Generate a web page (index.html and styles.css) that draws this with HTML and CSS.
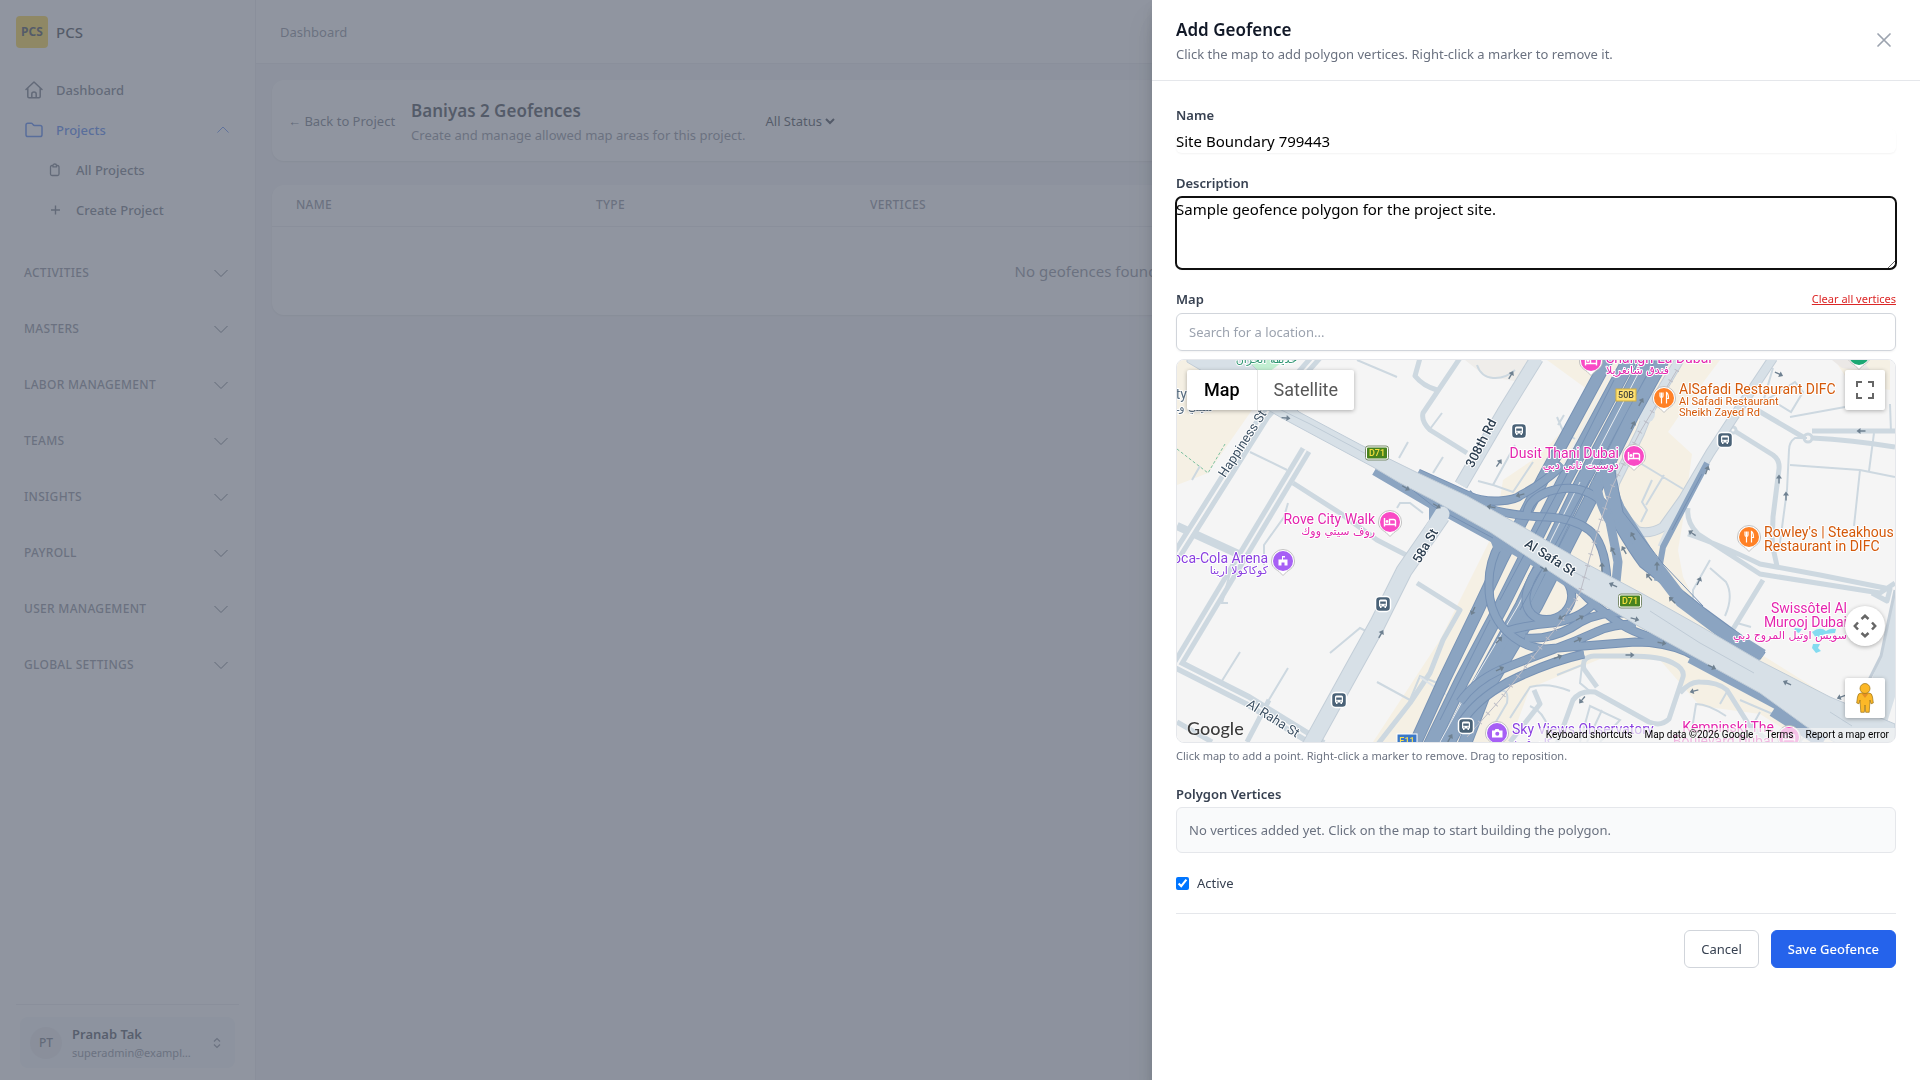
FILE: index.html
```html
<!DOCTYPE html>
<html lang="en">
<head>
<meta charset="utf-8">
<meta name="viewport" content="width=device-width, initial-scale=1">
<title>Add Geofence</title>
<link rel="stylesheet" href="styles.css">
</head>
<body>
<svg class="defs" width="0" height="0" aria-hidden="true">
  <defs>
    <symbol id="chevron" viewBox="0 0 14 14"><path d="M0.500 4l6.500 6.500L13.500 4" fill="none" stroke="currentColor"/></symbol>
    <g id="arrow" fill="#6f8191"><path d="M-4.500-0.700h5v-2.300L4.500 0 0.500 3V0.700h-5z"/></g>
    <g id="bus">
      <rect x="-7.500" y="-7.500" width="15" height="15" rx="4" fill="#4a6277" stroke="#fff" stroke-width="1.500"/>
      <path d="M-4-3q0-1.500 1.500-1.500h5q1.500 0 1.500 1.500v5.500h-1v1.500h-1.500v-1.500h-3v1.500h-1.500v-1.500h-1z" fill="#fff"/>
      <path d="M-2.800-2.500h5.600v2.300h-5.600z" fill="#4a6277"/>
      <circle cx="-2" cy="1.200" r=".6" fill="#4a6277"/><circle cx="2" cy="1.200" r=".6" fill="#4a6277"/>
    </g>
    <path id="pin" d="M-11.500 0a11.500 11.500 0 1 1 23 0c0 6-4 8-7.500 10.500L0 14.500l-4-4C-7.500 8-11.500 6-11.500 0z" fill="#fff" stroke="#b4b4b4" stroke-width=".8"/>
    <g id="hotel"><use href="#pin"/><circle r="10" fill="#f94ac5"/><path d="M-5.500-4v8.500M-5.500 2.500h11M5.500 4.500v-5q0-2-2-2h-4v5" fill="none" stroke="#fff" stroke-width="1.400"/><circle cx="-3" cy="-.5" r="1.400" fill="#fff"/></g>
    <g id="food"><use href="#pin"/><circle r="10" fill="#ff8126"/><path d="M-4-5.500v3.500q0 1.500 1.500 1.500t1.500-1.500v-3.500M-2.500-5.500V5.500M2.500 5.500v-11q2 1 2 6h-2" fill="none" stroke="#fff" stroke-width="1.200"/></g>
    <g id="d71"><rect x="-11.500" y="-7" width="23" height="14" rx="2.500" fill="#fff" stroke="#7b8c6c" stroke-width="1"/><rect x="-10" y="-5.500" width="20" height="11" rx="1" fill="#47821d"/></g>
  </defs>
</svg>

<div class="app">
  <aside class="sidebar">
    <div class="brand"><span class="brand-mark">PCS</span><span>PCS</span></div>
    <nav class="nav">
      <a class="nav-item" href="#">
        <svg class="nav-icon" viewBox="0 0 20 20" fill="none" stroke="currentColor" stroke-width="1.500" stroke-linejoin="round" stroke-linecap="round"><path d="M2 9.500L10 2l8 7.500M3.800 8v8.500q0 1.200 1.200 1.200h10q1.200 0 1.200-1.200V8M7.800 17.500V14q0-2 2.200-2t2.200 2v3.500"/></svg>
        <span>Dashboard</span></a>
      <a class="nav-item nav-active" href="#">
        <svg class="nav-icon" viewBox="0 0 20 20" fill="none" stroke="currentColor" stroke-width="1.500" stroke-linejoin="round"><path d="M2 5q0-1.800 1.800-1.800h3.400q.8 0 1.300.7l.7.9q.5.700 1.300.700h5.700Q18 5.500 18 7.300v7.400q0 1.800-1.800 1.800H3.800Q2 16.500 2 14.700z"/></svg>
        <span>Projects</span>
        <svg class="nav-chev up"><use href="#chevron"/></svg></a>
      <a class="nav-item nav-sub" href="#">
        <svg class="sub-icon" viewBox="0 0 14 14" fill="none" stroke="currentColor" stroke-width="1.300"><path d="M4.500 2.500H4Q2.500 2.500 2.500 4v7Q2.500 12.500 4 12.500h5.500q1.500 0 1.500-1.500V4Q11 2.500 9.500 2.500H9M5 3.800V2.500Q5 1 6.750 1T8.500 2.500v1.300z"/></svg>
        <span>All Projects</span></a>
      <a class="nav-item nav-sub" href="#">
        <svg class="sub-icon" viewBox="0 0 14 14" fill="none" stroke="currentColor" stroke-width="1.400"><path d="M7.500 2.500v9M3 7h9"/></svg>
        <span>Create Project</span></a>
    </nav>
    <div class="groups">
      <button class="group" type="button">ACTIVITIES<svg class="group-chev"><use href="#chevron"/></svg></button>
      <button class="group" type="button">MASTERS<svg class="group-chev"><use href="#chevron"/></svg></button>
      <button class="group" type="button">LABOR MANAGEMENT<svg class="group-chev"><use href="#chevron"/></svg></button>
      <button class="group" type="button">TEAMS<svg class="group-chev"><use href="#chevron"/></svg></button>
      <button class="group" type="button">INSIGHTS<svg class="group-chev"><use href="#chevron"/></svg></button>
      <button class="group" type="button">PAYROLL<svg class="group-chev"><use href="#chevron"/></svg></button>
      <button class="group" type="button">USER MANAGEMENT<svg class="group-chev"><use href="#chevron"/></svg></button>
      <button class="group" type="button">GLOBAL SETTINGS<svg class="group-chev"><use href="#chevron"/></svg></button>
    </div>
    <div class="account">
      <button class="account-card" type="button">
        <span class="avatar">PT</span>
        <span class="account-text"><span class="account-name">Pranab Tak</span><span class="account-mail">superadmin@example.com</span></span>
        <svg class="account-chev" viewBox="0 0 8 12" fill="none" stroke="currentColor" stroke-width="1.200"><path d="M1 4.500L4 1.500l3 3M1 7.500l3 3 3-3"/></svg>
      </button>
    </div>
  </aside>

  <div class="page">
    <header class="topbar">Dashboard</header>
    <main class="content">
      <section class="card title-card">
        <a class="back" href="#">← Back to Project</a>
        <div>
          <h1 class="page-title">Baniyas 2 Geofences</h1>
          <p class="page-sub">Create and manage allowed map areas for this project.</p>
        </div>
        <select class="status" aria-label="Status"><option>All Status</option></select>
      </section>
      <section class="card">
        <table class="grid">
          <thead><tr><th class="col-name">NAME</th><th class="col-type">TYPE</th><th>VERTICES</th></tr></thead>
          <tbody><tr><td colspan="3">No geofences found.</td></tr></tbody>
        </table>
      </section>
    </main>
  </div>
</div>

<div class="backdrop"></div>

<div class="drawer" role="dialog" aria-labelledby="drawer-title">
  <header class="drawer-head">
    <div>
      <h2 class="drawer-title" id="drawer-title">Add Geofence</h2>
      <p class="drawer-sub">Click the map to add polygon vertices. Right-click a marker to remove it.</p>
    </div>
    <button class="close" type="button" aria-label="Close"><svg viewBox="0 0 24 24" width="24" height="24" fill="none" stroke="currentColor" stroke-width="1.700" stroke-linecap="round"><path d="M6 6l12 12M18 6L6 18"/></svg></button>
  </header>
  <form class="form">
    <div class="field">
      <label class="label" for="name">Name</label>
      <input class="text-in" id="name" type="text" value="Site Boundary 799443">
    </div>
    <div class="field">
      <label class="label" for="desc">Description</label>
      <textarea class="text-in area" id="desc" rows="3">Sample geofence polygon for the project site.</textarea>
    </div>
    <div class="field">
      <div class="label-row"><label class="label" for="search">Map</label><button class="clear" type="button">Clear all vertices</button></div>
      <input class="search" id="search" type="text" placeholder="Search for a location...">
      <div class="map">
        <svg class="map-art" viewBox="1177 360 718 382" preserveAspectRatio="xMidYMid slice" role="img" aria-label="Street map of the project area">
          <rect x="1177" y="360" width="718" height="382" fill="#f5f5f5"/>
          <!-- open ground -->
          <g fill="#f5f0e4">
            <path d="M1177 360h30l52 40-51 73-31 12z"/>
            <path d="M1547 360h173l-30 40-22 32 24 22-9 66-5 30 5 27 17 33 27 23 168 105v4h-90l-45-28-60-8-40-46-60-1-70 29-20 54h-137l67-102 55-110 8-50 37-25 55-60z"/>
          </g>
          <path d="M1237 360l-6 6 30 12 24-18z" fill="#c2efd2"/>
          <path d="M1835 360h55v30l-40-6z" fill="#f5f0e4"/>
          <path d="M1832 360h30l10 12-30-4z" fill="#ebe8e6"/>
          <path d="M1465 360h70l-15 22-35-6z" fill="#efedea"/>
          <path d="M1177 449l31 24 17-29" fill="none" stroke="#7cc0a0" stroke-dasharray="3 2"/>
          <path d="M1812 632q8-6 14-1 4-3 10-2l-1 4-10 1-9 4zM1813 644l7 0-2 4 3 3-5 2-4-5zM1795 628l7 1-3 4-5-2z" fill="#84dbf0"/>

          <!-- local streets -->
          <g fill="none" stroke="#cdd8e0" stroke-width="5" stroke-linejoin="round">
            <path d="M1293 483l47 30 37 27 33 17M1417 583l43 27-17 30-13 33-20 30-32 41M1460 358l-37 55q-2 8 7 17l37 23M1420 358l-5 18q8 10 22 14"/>
            <path d="M1757 410l46 27M1812 431h83M1812 438q40 2 83 9M1733 430l40 25q7 5 6 14l-6 48-1 34M1688 508q-2 14 10 26l62 40 120 19 15-10M1763 580l-33 54M1688 534q30 10 72 30l60 11 70 14-3 12-15-8M1773 548l4 18"/>
            <path d="M1597 687l-13-18q-3-12 10-13l36 0q30 0 43 7 12 6 10 14l-14 42q-8 8-20 3l-54-30q-15-2-22 8l-16 44M1680 693q10-12 20-11 18 0 27 8l22 35 20 17M1510 742l30-38-6-14"/>
            <path d="M1177 722l35 20M1247 742l22-42"/>
          </g>
          <g fill="none" stroke="#cdd8e0" stroke-width="12">
            <path d="M1318 355l-53 60-92 146"/><path d="M1306 450l-36 60-93 155"/><path d="M1177 526l70 32" stroke-width="8"/>
            <path d="M1172 662l75 38 75 46" stroke-width="13"/>
          </g>
          <g fill="none" stroke="#f5f5f5" stroke-width="2">
            <path d="M1318 355l-53 60-92 146"/><path d="M1306 450l-36 60-93 155"/><path d="M1172 662l75 38 75 46"/>
          </g>
          <circle cx="1808" cy="438" r="4" fill="#f5f5f5" stroke="#cdd8e0" stroke-width="3"/>
          <circle cx="1733" cy="430" r="3" fill="#f5f5f5" stroke="#cdd8e0" stroke-width="3"/>
          <g fill="none" stroke="#cdd8e0" stroke-width="2">
            <path d="M1250 452l37 18M1357 360l40 17M1477 365q4 12 16 13t22-8M1397 508l3-5h10l13 10M1330 653l30-25 8 4M1377 682l33 18M1240 652l-20 32M1288 668l-30 50M1288 503l-4 14-20 28v20M1230 573l-8 30h6M1408 442l-9 16M1443 457l-10 16M1442 413l-12 16M1192 480l8-14"/>
            <path d="M1790 417l55-10M1807 438l-12 0q-6 4-6 12l-2 40-8 60M1790 465l70 5 35 7M1860 470l-6 56M1874 433l-5 38M1890 404l1 28M1710 560l-17 30v17l27 20M1710 568l16 14q8 14-1 34M1773 368l-10 34 32-20 8 10-12 20-13-8M1557 417l6 14 12 8M1564 415l-6 10"/>
            <path d="M1640 463l43 26M1652 480l-10 22 5 8-6 12M1664 475l-18 30M1510 718l20-31q18-5 40 4M1530 706q14 6 18 22M1557 675l25-10-2 18 12 10M1580 742l10-36 30 14-20 22M1602 710l-15 32M1690 742l6-38q12 0 30 12M1740 700l70 30-10 12M1728 690l-8 14M1760 712l-10 18M1487 737l20-34q2-14-6-12l-20 10-40 41M1410 700l10-24 20 8M1515 445l-22 40 20 7 20-30M1493 485l-15-4M1737 623l14 4"/>
            <path d="M1420 677l53 36" stroke="#dfe5ea"/>
          </g>

          <!-- wide streets -->
          <g fill="none" stroke="#c3ced8" stroke-linejoin="round">
            <path d="M1537 358l-34 55-42 72" stroke-width="14"/>
            <path d="M1442 516l-38 55-27 54-25 45-42 76" stroke-width="17"/>
            <path d="M1773 358l-36 54-27 41-27 46-20 28q-14 8-26 4l-18-20q-8-14-4-28l25-50 8-20 32-54" stroke-width="10"/>
          </g>
          <g fill="none" stroke="#d7e0e7" stroke-linejoin="round">
            <path d="M1537 358l-34 55-42 72" stroke-width="12"/>
            <path d="M1442 516l-38 55-27 54-25 45-42 76" stroke-width="15"/>
            <path d="M1773 358l-36 54-27 41-27 46-20 28q-14 8-26 4l-18-20q-8-14-4-28l25-50 8-20 32-54" stroke-width="8"/>
            <path d="M1683 499l-22 48" stroke-width="7"/>
            <path d="M1646 400v14" stroke-width="18" stroke-linecap="round"/>
          </g>
          <path d="M1895 590l-14 66-16 40 10 46h6l14-45z" fill="#d7e0e7"/>
          <path d="M1895 590l-14 66-18 36" fill="none" stroke="#c3ced8" stroke-width="3"/>

          <!-- expressway lanes -->
          <g fill="none" stroke="#7893b5" stroke-linejoin="round">
            <path d="M1414 746l30-66 32-66 26-55 42-82 66-122" stroke-width="13"/>
            <path d="M1430 746l32-66 40-75 62-124 68-126" stroke-width="15"/>
            <path d="M1446 746l30-56 46-84 60-124 68-128" stroke-width="15"/>
            <path d="M1464 746l20-52 52-88 56-110 40-80 34-62" stroke-width="14"/>
          </g>
          <g fill="none" stroke="#8ba4c1" stroke-linejoin="round">
            <path d="M1414 746l30-66 32-66 26-55 42-82 66-122" stroke-width="11"/>
            <path d="M1430 746l32-66 40-75 62-124 68-126" stroke-width="13"/>
            <path d="M1446 746l30-56 46-84 60-124 68-128" stroke-width="13"/>
            <path d="M1464 746l20-52 52-88 56-110 40-80 34-62" stroke-width="12"/>
          </g>
          <g fill="none" stroke="#e9edf0" stroke-width="1">
            <path d="M1440 742l34-62 44-74 62-124M1544 500l26-48 42-82M1590 466l50-96"/>
          </g>

          <!-- ramps, drawn as an edge colour under a fill colour -->
          <g fill="none" stroke="#7691b4" stroke-width="9" stroke-linejoin="round">
            <path d="M1418 473l49 22q15 7 32 6t22-6q20-10 42-30M1467 493q10 13 30 18t50 6q26 1 42 13t18 50M1527 519q-2-18 20-27 24-8 42 1 18 8 30 34 14 24 24 37l60 48 60 44"/>
            <path d="M1547 567q14 4 22 18 7 14-4 27-12 11-28 6-12-6-11-22 2-14 12-28M1500 543q-12 20-11 44 0 22 12 38 18 22 44 24l90-7q30 0 52 10l80 42 60 40M1507 631q20-6 45-8 28-4 42-20M1525 638q24 2 46-10 20-14 42-15 16-2 40 10M1460 702q14-20 40-32 30-12 52-20t44-18q16-8 40-8M1462 722q14-22 46-40 40-20 76-28M1580 590q16 18 44 36 16 10 60 20"/>
          </g>
          <g fill="none" stroke="#8ba4c1" stroke-width="7" stroke-linejoin="round">
            <path d="M1418 473l49 22q15 7 32 6t22-6q20-10 42-30M1467 493q10 13 30 18t50 6q26 1 42 13t18 50M1527 519q-2-18 20-27 24-8 42 1 18 8 30 34 14 24 24 37l60 48 60 44"/>
            <path d="M1547 567q14 4 22 18 7 14-4 27-12 11-28 6-12-6-11-22 2-14 12-28M1500 543q-12 20-11 44 0 22 12 38 18 22 44 24l90-7q30 0 52 10l80 42 60 40M1507 631q20-6 45-8 28-4 42-20M1525 638q24 2 46-10 20-14 42-15 16-2 40 10M1460 702q14-20 40-32 30-12 52-20t44-18q16-8 40-8M1462 722q14-22 46-40 40-20 76-28M1580 590q16 18 44 36 16 10 60 20"/>
            <path d="M1610 455q-4 30 8 54l32 50 32 42 40 30 40 25" stroke-width="14"/>
            <path d="M1596 480q2 22 14 42l8 40-2 20" stroke-width="9"/>
            <path d="M1707 463l-20 38-24 46-6 34" stroke-width="6"/>
            <path d="M1375 470l58 34 62 34 52 30 40 26" stroke-width="11"/>
            <path d="M1433 506v14M1493 536l6 16" stroke-width="8"/>
            <path d="M1690 658l90 48" stroke-width="10"/>
            <path d="M1774 709l50 32" stroke-width="16"/>
          </g>
          <g fill="none" stroke="#7691b4" stroke-width="1">
            <path d="M1613 462l10 50 40 52 40 42M1702 474l-30 56M1405 484l28 22 60 32M1440 720l50-100M1500 600l64-120 50-100M1520 610l70-130"/>
          </g>

          <!-- Al Safa Street -->
          <path d="M1187 350L1237 350 1299 412 1361 445 1418 473 1467 496 1523 527 1587 564 1643 594 1700 626 1760 661 1830 697 1895 724 1895 760 1840 745 1807 727 1760 693 1700 660 1640 627 1583 593 1540 565 1490 532 1433 500 1400 483 1373 467 1280 417 1187 362z" fill="#d7e0e7" stroke="#c0ccd7"/>
          <g fill="none" stroke="#bfcbd6" stroke-width="1"><path d="M1240 390l70 34 60 32M1570 570l20 10M1650 611l50 32 54 30M1830 712l22 14"/></g>
          <path d="M1442 514l-10 16" stroke="#d7e0e7" stroke-width="15" stroke-linecap="round"/>

          <!-- metro line -->
          <g fill="none" stroke="#bcbdc6">
            <path d="M1677 370l-37 62-28 55-12 36-10 34-10 36-20 30-27 34-33 43-33 37"/>
            <path d="M1677 370l-37 62-28 55-12 36-10 34-10 36-20 30-27 34-33 43-33 37" stroke-width="5" stroke-dasharray="1 11"/>
          </g>

          <!-- one-way arrows -->
          <g>
            <use href="#arrow" transform="translate(1286 418) rotate(5)"/><use href="#arrow" transform="translate(1406 488) rotate(30)"/><use href="#arrow" transform="translate(1437 506) rotate(30)"/><use href="#arrow" transform="translate(1511 375) rotate(-60)"/><use href="#arrow" transform="translate(1499 463) rotate(-55)"/><use href="#arrow" transform="translate(1520 495) rotate(165)"/><use href="#arrow" transform="translate(1491 507) rotate(190)"/><use href="#arrow" transform="translate(1544 569) rotate(30)"/><use href="#arrow" transform="translate(1473 611) rotate(115)"/><use href="#arrow" transform="translate(1381 634) rotate(-60)"/><use href="#arrow" transform="translate(1499 640) rotate(-45)"/><use href="#arrow" transform="translate(1500 669) rotate(-25)"/><use href="#arrow" transform="translate(1450 738) rotate(-60)"/><use href="#arrow" transform="translate(1562 617) rotate(150)"/><use href="#arrow" transform="translate(1580 618) rotate(-30)"/><use href="#arrow" transform="translate(1578 640) rotate(-25)"/><use href="#arrow" transform="translate(1558 657) rotate(-20)"/><use href="#arrow" transform="translate(1602 567) rotate(-90)"/><use href="#arrow" transform="translate(1613 551) rotate(-120)"/><use href="#arrow" transform="translate(1624 550) rotate(-120)"/><use href="#arrow" transform="translate(1633 536) rotate(-120)"/><use href="#arrow" transform="translate(1613 585) rotate(205)"/><use href="#arrow" transform="translate(1649 577) rotate(-130)"/><use href="#arrow" transform="translate(1657 566) rotate(-90)"/><use href="#arrow" transform="translate(1672 600) rotate(-135)"/><use href="#arrow" transform="translate(1635 619) rotate(15)"/><use href="#arrow" transform="translate(1662 643) rotate(10)"/><use href="#arrow" transform="translate(1712 667) rotate(25)"/><use href="#arrow" transform="translate(1630 655)"/><use href="#arrow" transform="translate(1694 691) rotate(165)"/><use href="#arrow" transform="translate(1582 700) rotate(130)"/><use href="#arrow" transform="translate(1787 683) rotate(205)"/><use href="#arrow" transform="translate(1841 697) rotate(160)"/><use href="#arrow" transform="translate(1707 470) rotate(-70)"/><use href="#arrow" transform="translate(1779 479) rotate(-90)"/><use href="#arrow" transform="translate(1786 496) rotate(-90)"/><use href="#arrow" transform="translate(1861 431) rotate(180)"/><use href="#arrow" transform="translate(1692 533) rotate(215)"/><use href="#arrow" transform="translate(1699 581) rotate(-65)"/><use href="#arrow" transform="translate(1633 425) rotate(-65)"/><use href="#arrow" transform="translate(1641 402) rotate(-60)"/><use href="#arrow" transform="translate(1779 374) rotate(25)"/>
          </g>

          <!-- shields and stops -->
          <use href="#d71" x="1377" y="453"/><text class="shield" x="1377" y="456" fill="#f4e03c">D71</text>
          <use href="#d71" x="1630" y="601"/><text class="shield" x="1630" y="604" fill="#f4e03c">D71</text>
          <rect x="1616" y="389" width="20" height="12" fill="#fde073" stroke="#d3b03f"/><text class="shield" x="1626" y="398" fill="#4a4a3c">50B</text>
          <rect x="1397" y="734" width="20" height="13" fill="#3b78c8" stroke="#fff"/><text class="shield" x="1407" y="744" fill="#f7df52">E11</text>
          <use href="#bus" x="1519" y="431"/><use href="#bus" x="1383" y="604"/><use href="#bus" x="1339" y="700"/><use href="#bus" x="1466" y="726"/><use href="#bus" x="1725" y="440"/>

          <!-- street names -->
          <g class="street">
            <text transform="translate(1246 446) rotate(-57)">Happiness St</text>
            <text transform="translate(1485 445) rotate(-63)" class="bold">308th Rd</text>
            <text transform="translate(1429 548) rotate(-60)" class="bold">58a St</text>
            <text transform="translate(1548 561) rotate(32)" class="bold">Al Safa St</text>
            <text transform="translate(1271 722) rotate(32)">Al Raha St</text>
          </g>

          <!-- places -->
          <g class="end poi">
            <text x="1375" y="524" fill="#e425ae">Rove City Walk</text><text x="1375" y="535" fill="#e425ae" class="ar">روف سيتي ووك</text>
            <text x="1268" y="563" fill="#8a3fe0">Coca-Cola Arena</text><text x="1268" y="574" fill="#8a3fe0" class="ar">كوكاكولا ارينا</text>
            <text x="1619" y="458" fill="#e425ae">Dusit Thani Dubai</text><text x="1619" y="469" fill="#e425ae" class="ar">دوسيت ثاني دبي</text>
            <text x="1847" y="613" fill="#e425ae">Swissôtel Al</text><text x="1847" y="627" fill="#e425ae">Murooj Dubai</text><text x="1847" y="639" fill="#e425ae" class="ar">سويس اوتيل المروج دبي</text>
            <text x="1774" y="732" fill="#e425ae">Kempinski The</text><text x="1774" y="746" fill="#e425ae">Boulevard Dubai</text>
            <text x="1297" y="363" fill="#2d9470" class="ar">حديقة الخزان</text>
            <text x="1187" y="399" fill="#5a6f82">ty</text><text x="1213" y="411" fill="#5a6f82" class="ar">سيتي وـ</text>
          </g>
          <g class="poi">
            <text x="1606" y="363" fill="#e425ae">Shangri-La Dubai</text><text x="1606" y="374" fill="#e425ae" class="ar">فندق شانغريلا</text>
            <text x="1679" y="394" fill="#d4590a">AlSafadi Restaurant DIFC</text><text x="1679" y="405" fill="#d4590a" class="small">Al Safadi Restaurant</text><text x="1679" y="416" fill="#d4590a" class="small">Sheikh Zayed Rd</text>
            <text x="1764" y="537" fill="#d4590a">Rowley's | Steakhous</text><text x="1764" y="551" fill="#d4590a">Restaurant in DIFC</text>
            <text x="1512" y="734" fill="#8a3fe0">Sky Views Observatory</text><text x="1512" y="746" fill="#8a3fe0" class="ar">سكاي فيوز</text>
          </g>
          <use href="#hotel" x="1390" y="522"/><use href="#hotel" x="1634" y="456"/><use href="#hotel" x="1591" y="361"/><use href="#hotel" x="1789" y="737"/>
          <use href="#food" x="1664" y="398"/><use href="#food" x="1749" y="537"/>
          <g transform="translate(1859 355)"><use href="#pin"/><circle r="10" fill="#1ba874"/></g>
          <g transform="translate(1283 561)"><use href="#pin"/><circle r="10" fill="#a760f5"/><path d="M-4.500 4.500v-6H-1V-5h3v1.500H0v2h4.500v6H1.500v-3h-3v3z" fill="#fff"/></g>
          <g transform="translate(1497 733)"><use href="#pin"/><circle r="10" fill="#a760f5"/><path d="M-5-2.500h2.500l1-1.500h3l1 1.500H5.500v7h-10.500z" fill="#fff"/><circle cx=".3" cy=".8" r="2" fill="#a760f5"/></g>
        </svg>
        <div class="map-type"><button class="map-btn on" type="button">Map</button><button class="map-btn" type="button">Satellite</button></div>
        <button class="ctl ctl-full" type="button" aria-label="Toggle fullscreen view"><svg viewBox="0 0 18 18" width="18" height="18" fill="none" stroke="#666" stroke-width="2"><path d="M1 6V1h5M12 1h5v5M17 12v5h-5M6 17H1v-5"/></svg></button>
        <button class="ctl ctl-cam" type="button" aria-label="Map camera controls"><svg viewBox="0 0 24 24" width="24" height="24" fill="none" stroke="#666" stroke-width="2.500"><path d="M8.500 5L12 1.800 15.500 5M8.500 19l3.500 3.200 3.500-3.200M5 8.500L1.800 12 5 15.500M19 8.500l3.200 3.500L19 15.500"/></svg></button>
        <button class="ctl ctl-peg" type="button" aria-label="Street View"><svg viewBox="0 0 18 30" width="18" height="30"><path d="M5 10h8q3 0 3.500 4l.8 6-2.300.8-1-3.800-.8 12.300H9.700L9 22l-.7 7.300H4.800L4 17l-1 3.800L.7 20l.8-6Q2 10 5 10z" fill="#fcb827" stroke="#9c7417" stroke-width=".7"/><path d="M5.500 10.500h7L9 15z" fill="#e58f25"/><circle cx="9" cy="5.500" r="5" fill="#fcb827" stroke="#9c7417" stroke-width=".7"/></svg></button>
        <a class="google" href="#">Google</a>
        <div class="credits"><button class="credit" type="button">Keyboard shortcuts</button><span class="credit">Map data ©2026 Google</span><a class="credit" href="#">Terms</a><a class="credit" href="#">Report a map error</a></div>
      </div>
      <p class="hint">Click map to add a point. Right-click a marker to remove. Drag to reposition.</p>
    </div>
    <div class="field">
      <span class="label">Polygon Vertices</span>
      <div class="empty">No vertices added yet. Click on the map to start building the polygon.</div>
    </div>
    <div class="check"><input type="checkbox" id="active" checked><label for="active">Active</label></div>
    <div class="actions"><button class="btn" type="button">Cancel</button><button class="btn primary" type="submit">Save Geofence</button></div>
  </form>
</div>
</body>
</html>
```
FILE: styles.css
```css
* { box-sizing: border-box; margin: 0; padding: 0; }
body { font-family: "Noto Sans", "Open Sans", sans-serif; font-size: 13px; line-height: 20px; color: #374151; background: #f3f4f6; }
button, input, textarea, select { font: inherit; color: inherit; border: 0; background: none; }
a { color: inherit; text-decoration: none; }
svg { display: block; flex: none; }
.defs { position: absolute; }

.app { display: flex; height: 100vh; }
.sidebar { width: 256px; flex: none; display: flex; flex-direction: column; background: #fff; border-right: 1px solid #e5e7eb; }
.brand { display: flex; align-items: center; gap: 8px; padding: 16px 16px 0; font-size: 15px; font-weight: 500; color: #111827; }
.brand-mark { width: 32px; height: 32px; border-radius: 4px; background: #facc15; font-size: 12px; font-weight: 700; line-height: 32px; text-align: center; }
.nav { padding-top: 22px; }
.nav-item { display: flex; align-items: center; gap: 12px; height: 40px; padding: 0 26px 0 24px; font-weight: 500; color: #4b5563; }
.nav-icon { width: 20px; height: 20px; }
.nav-active { color: #2563eb; }
.nav-chev { width: 12px; height: 12px; margin-left: auto; }
.up { transform: rotate(180deg); }
.nav-sub { gap: 14px; padding-left: 48px; }
.sub-icon { width: 14px; height: 14px; }
.groups { flex: 1; padding-top: 15px; }
.group { display: flex; align-items: center; justify-content: space-between; width: 100%; height: 56px; padding: 0 27px 0 24px; font-size: 12px; font-weight: 500; letter-spacing: 0.3px; color: #6b7280; }
.group-chev { width: 14px; height: 14px; color: #4b5563; }
.account { margin: 0 16px; padding: 12px 4px; border-top: 1px solid #e5e7eb; }
.account-card { display: flex; align-items: center; gap: 10px; width: 100%; height: 51px; padding: 0 14px 0 10px; border-radius: 8px; background: #f1f5f9; text-align: left; }
.avatar { width: 32px; height: 32px; flex: none; border-radius: 50%; background: #e5e7eb; font-size: 12px; font-weight: 500; line-height: 32px; text-align: center; color: #4b5563; }
.account-text { flex: 1; min-width: 0; display: flex; flex-direction: column; }
.account-name { font-weight: 600; line-height: 19px; color: #1f2937; }
.account-mail { width: 122px; overflow: hidden; text-overflow: ellipsis; white-space: nowrap; font-size: 11px; line-height: 17px; color: #6b7280; }
.account-chev { width: 8px; height: 12px; color: #6b7280; }

.page { flex: 1; min-width: 0; }
.topbar { height: 64px; padding: 0 24px; line-height: 64px; background: #fff; border-bottom: 1px solid #e5e7eb; color: #6b7280; }
.content { display: flex; flex-direction: column; gap: 24px; padding: 16px; }
.card { background: #fff; border-radius: 12px; box-shadow: 0 1px 2px rgba(0, 0, 0, 0.1); overflow: hidden; }
.title-card { display: flex; align-items: center; gap: 16px; height: 81px; padding: 0 16px; }
.back { color: #4b5563; }
.page-title { font-size: 17px; font-weight: 600; line-height: 28px; color: #111827; }
.page-sub { color: #6b7280; }
.status { color: #111827; }
.grid { width: 100%; border-collapse: collapse; }
.grid th { height: 41px; padding: 0 24px; text-align: left; font-size: 12px; font-weight: 500; letter-spacing: 0.3px; color: #6b7280; border-bottom: 1px solid #e5e7eb; }
.col-name { width: 300px; }
.col-type { width: 274px; }
.grid td { height: 89px; text-align: center; font-size: 15px; color: #6b7280; }

.backdrop { position: fixed; inset: 0; background: rgba(107, 114, 128, 0.75); }
.drawer { position: fixed; inset: 0 0 0 auto; width: 768px; max-width: 100%; overflow-y: auto; background: #fff; box-shadow: 0 20px 25px rgba(0, 0, 0, 0.1), 0 8px 10px rgba(0, 0, 0, 0.1); }
.drawer-head { display: flex; align-items: center; justify-content: space-between; padding: 16px 24px; border-bottom: 1px solid #e5e7eb; }
.drawer-title { font-size: 17px; font-weight: 600; line-height: 28px; color: #111827; }
.drawer-sub { color: #6b7280; }
.close { height: 24px; color: #9ca3af; }
.form { display: flex; flex-direction: column; gap: 20px; padding: 24px; }
.field { display: flex; flex-direction: column; }
.label { font-weight: 600; color: #374151; }
.label-row { display: flex; justify-content: space-between; }
.text-in { display: block; width: 100%; height: 24px; margin-top: 4px; border-radius: 6px; box-shadow: 0 1px 2px rgba(0, 0, 0, 0.05); font-size: 15px; line-height: 24px; color: #000; }
.area { height: 72px; resize: vertical; outline: 2px solid #101010; outline-offset: -1px; }
.clear { font-size: 11px; color: #dc2626; text-decoration: underline; }
.search { height: 38px; margin-top: 4px; padding: 0 12px; border: 1px solid #d1d5db; border-radius: 6px; box-shadow: 0 1px 2px rgba(0, 0, 0, 0.05); }
.search::placeholder { color: #9ca3af; }

.map { position: relative; height: 384px; margin-top: 8px; border: 1px solid #e5e7eb; border-radius: 8px; overflow: hidden; font-family: Roboto, sans-serif; }
.map-art { width: 100%; height: 100%; }
.map-art text { paint-order: stroke; stroke: #fff; stroke-width: 2px; stroke-linejoin: round; }
.map-art .shield { stroke: none; font-size: 9px; font-weight: 500; text-anchor: middle; }
.street text { font-size: 13px; fill: #3c5063; text-anchor: middle; }
.street .bold { font-weight: 500; fill: #2c3e50; }
.poi text { font-size: 14px; }
.poi .ar { font-family: "DejaVu Sans", sans-serif; font-size: 11px; }
.poi .small { font-size: 11px; }
.end { text-anchor: end; }
.map-type { position: absolute; top: 10px; left: 10px; display: flex; height: 40px; background: #fff; border-radius: 2px; box-shadow: 0 1px 4px rgba(0, 0, 0, 0.3); font-size: 18px; color: #565656; }
.map-btn { padding: 0 16px; }
.map-btn.on { padding: 0 17px; font-weight: 500; color: #000; border-right: 1px solid #e6e6e6; }
.ctl { position: absolute; right: 10px; width: 40px; height: 40px; display: flex; align-items: center; justify-content: center; background: #fff; border-radius: 2px; box-shadow: 0 1px 4px rgba(0, 0, 0, 0.3); }
.ctl-full { top: 10px; }
.ctl-cam { bottom: 96px; border-radius: 50%; }
.ctl-peg { bottom: 24px; }
.google { position: absolute; left: 10px; bottom: 2px; font-family: Lato, sans-serif; font-size: 18px; line-height: 24px; font-weight: 500; color: #3c3c3c; text-shadow: 0 0 2px #fff, 0 0 2px #fff; }
.credits { position: absolute; right: 0; bottom: 0; display: flex; height: 14px; font-size: 10px; line-height: 14px; color: #000; background: rgba(245, 245, 245, 0.7); }
.credit { padding: 0 6px; white-space: nowrap; }
.hint { margin-top: 5px; font-size: 11px; line-height: 16px; color: #6b7280; }
.empty { margin-top: 3px; padding: 12px; border: 1px solid #e5e7eb; border-radius: 6px; background: #f9fafb; color: #6b7280; }
.check { display: flex; align-items: center; gap: 8px; }
.check input { width: 13px; height: 13px; accent-color: #0075ff; }
.actions { display: flex; justify-content: flex-end; gap: 12px; padding-top: 16px; border-top: 1px solid #e5e7eb; }
.btn { height: 38px; padding: 0 16px; border: 1px solid #d1d5db; border-radius: 6px; }
.primary { border-color: #2563eb; background: #2563eb; color: #fff; font-weight: 500; }
```
